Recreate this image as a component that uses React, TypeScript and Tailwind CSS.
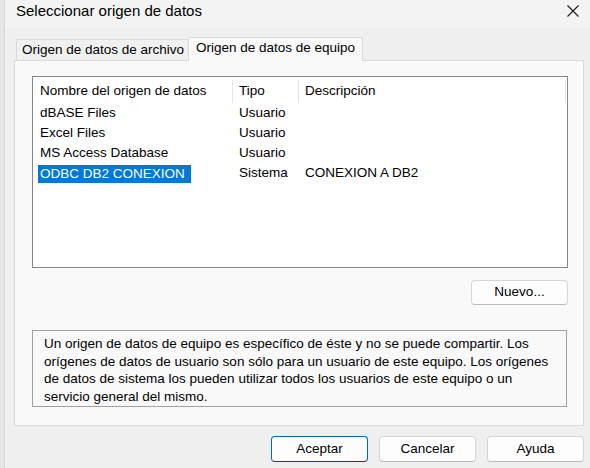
import React from 'react';

const rows = [
  { name: 'dBASE Files', type: 'Usuario', desc: '' },
  { name: 'Excel Files', type: 'Usuario', desc: '' },
  { name: 'MS Access Database', type: 'Usuario', desc: '' },
  { name: 'ODBC DB2 CONEXION', type: 'Sistema', desc: 'CONEXION A DB2', selected: true },
];

function Button({ label, primary }: { label: string; primary?: boolean }) {
  return (
    <button
      className={`w-[97px] h-[26px] rounded-[4px] bg-[#fdfdfd] text-[13.5px] text-black flex items-center justify-center border ${
        primary ? 'border-[#0067c0] border-b-[#003e92]' : 'border-[#d5d5d5] border-b-[#bcbcbc]'
      }`}
    >
      {label}
    </button>
  );
}

export default function App() {
  return (
    <div
      className="w-[590px] h-[468px] flex bg-[#efefef] text-black overflow-hidden"
      style={{ fontFamily: '"Liberation Sans", Arial, sans-serif' }}
    >
      {/* left window edge */}
      <div className="w-[5px] bg-[#e6e6e6] border-r border-[#d6d6d6]" />

      <div className="flex-1 flex flex-col">
        {/* title bar */}
        <div className="h-[28px] bg-[#f3f3f3] flex items-center justify-between pl-[11px] pr-[11px]">
          <span className="text-[15px] leading-none -mt-[7px]">Seleccionar origen de datos</span>
          <svg width="12" height="12" viewBox="0 0 12 12" className="-mt-[6px]">
            <path d="M0.5 0.5 L11.5 11.5 M11.5 0.5 L0.5 11.5" stroke="#1a1a1a" strokeWidth="1.1" />
          </svg>
        </div>

        <div className="ml-[9px] w-[570px] mt-[9px]">
          {/* tabs */}
          <div className="flex items-end pl-[2px] h-[23px] whitespace-nowrap">
            <div className="h-[21px] w-[173px] pl-[5px] flex items-center border border-b-0 border-[#d9d9d9] bg-[#f0f0f0] text-[13.5px]">
              Origen de datos de archivo
            </div>
            <div className="relative z-10 -mb-px h-[24px] w-[174px] pl-[7px] pb-[2px] flex items-center border border-b-0 border-l-0 border-[#d9d9d9] bg-[#f9f9f9] text-[13.5px]">
              Origen de datos de equipo
            </div>
          </div>

          {/* panel */}
          <div className="h-[366px] bg-[#f9f9f9] border border-[#dadada] pl-[17px] pt-[15px] flex flex-col">
            {/* list view */}
            <div className="w-[536px] h-[192px] bg-white border border-[#838790] text-[13.5px] pt-[3px]">
              <div className="grid grid-cols-[200px_66px_1fr] h-[23px] items-stretch">
                <div className="pl-[7px] flex items-center border-r border-[#e5e5e5]">Nombre del origen de datos</div>
                <div className="pl-[6px] flex items-center border-r border-[#e5e5e5]">Tipo</div>
                <div className="pl-[6px] flex items-center border-r border-[#e5e5e5] mr-[1px]">Descripción</div>
              </div>
              {rows.map((r) => (
                <div key={r.name} className="grid grid-cols-[200px_66px_1fr] h-[20px] items-center">
                  {r.selected ? (
                    <div className="pl-[5px] flex">
                      <span className="bg-[#0078d7] text-white pl-[2px] pr-[6px] h-[18px] mt-[1px] flex items-center">
                        {r.name}
                      </span>
                    </div>
                  ) : (
                    <div className="pl-[7px]">{r.name}</div>
                  )}
                  <div className="pl-[6px]">{r.type}</div>
                  <div className="pl-[6px]">{r.desc}</div>
                </div>
              ))}
            </div>

            <div className="w-[536px] flex justify-end mt-[12px]">
              <div className="w-[97px] h-[25px] rounded-[4px] bg-[#fdfdfd] border border-[#d5d5d5] border-b-[#bcbcbc] text-[13.5px] flex items-center justify-center">
                Nuevo...
              </div>
            </div>

            {/* info text */}
            <div className="w-[535px] h-[77px] mt-[25px] border border-[#a0a0a0] pl-[11px] pr-[10px] pt-[4px] text-[13.5px] leading-[17.5px]">
              Un origen de datos de equipo es específico de éste y no se puede compartir. Los orígenes de datos de usuario son sólo para un usuario de este equipo. Los orígenes de datos de sistema los pueden utilizar todos los usuarios de este equipo o un servicio general del mismo.
            </div>
          </div>
        </div>

        {/* bottom buttons */}
        <div className="flex justify-end gap-[11px] mt-[10px] pr-[6px]">
          <Button label="Aceptar" primary />
          <Button label="Cancelar" />
          <Button label="Ayuda" />
        </div>
      </div>
    </div>
  );
}
